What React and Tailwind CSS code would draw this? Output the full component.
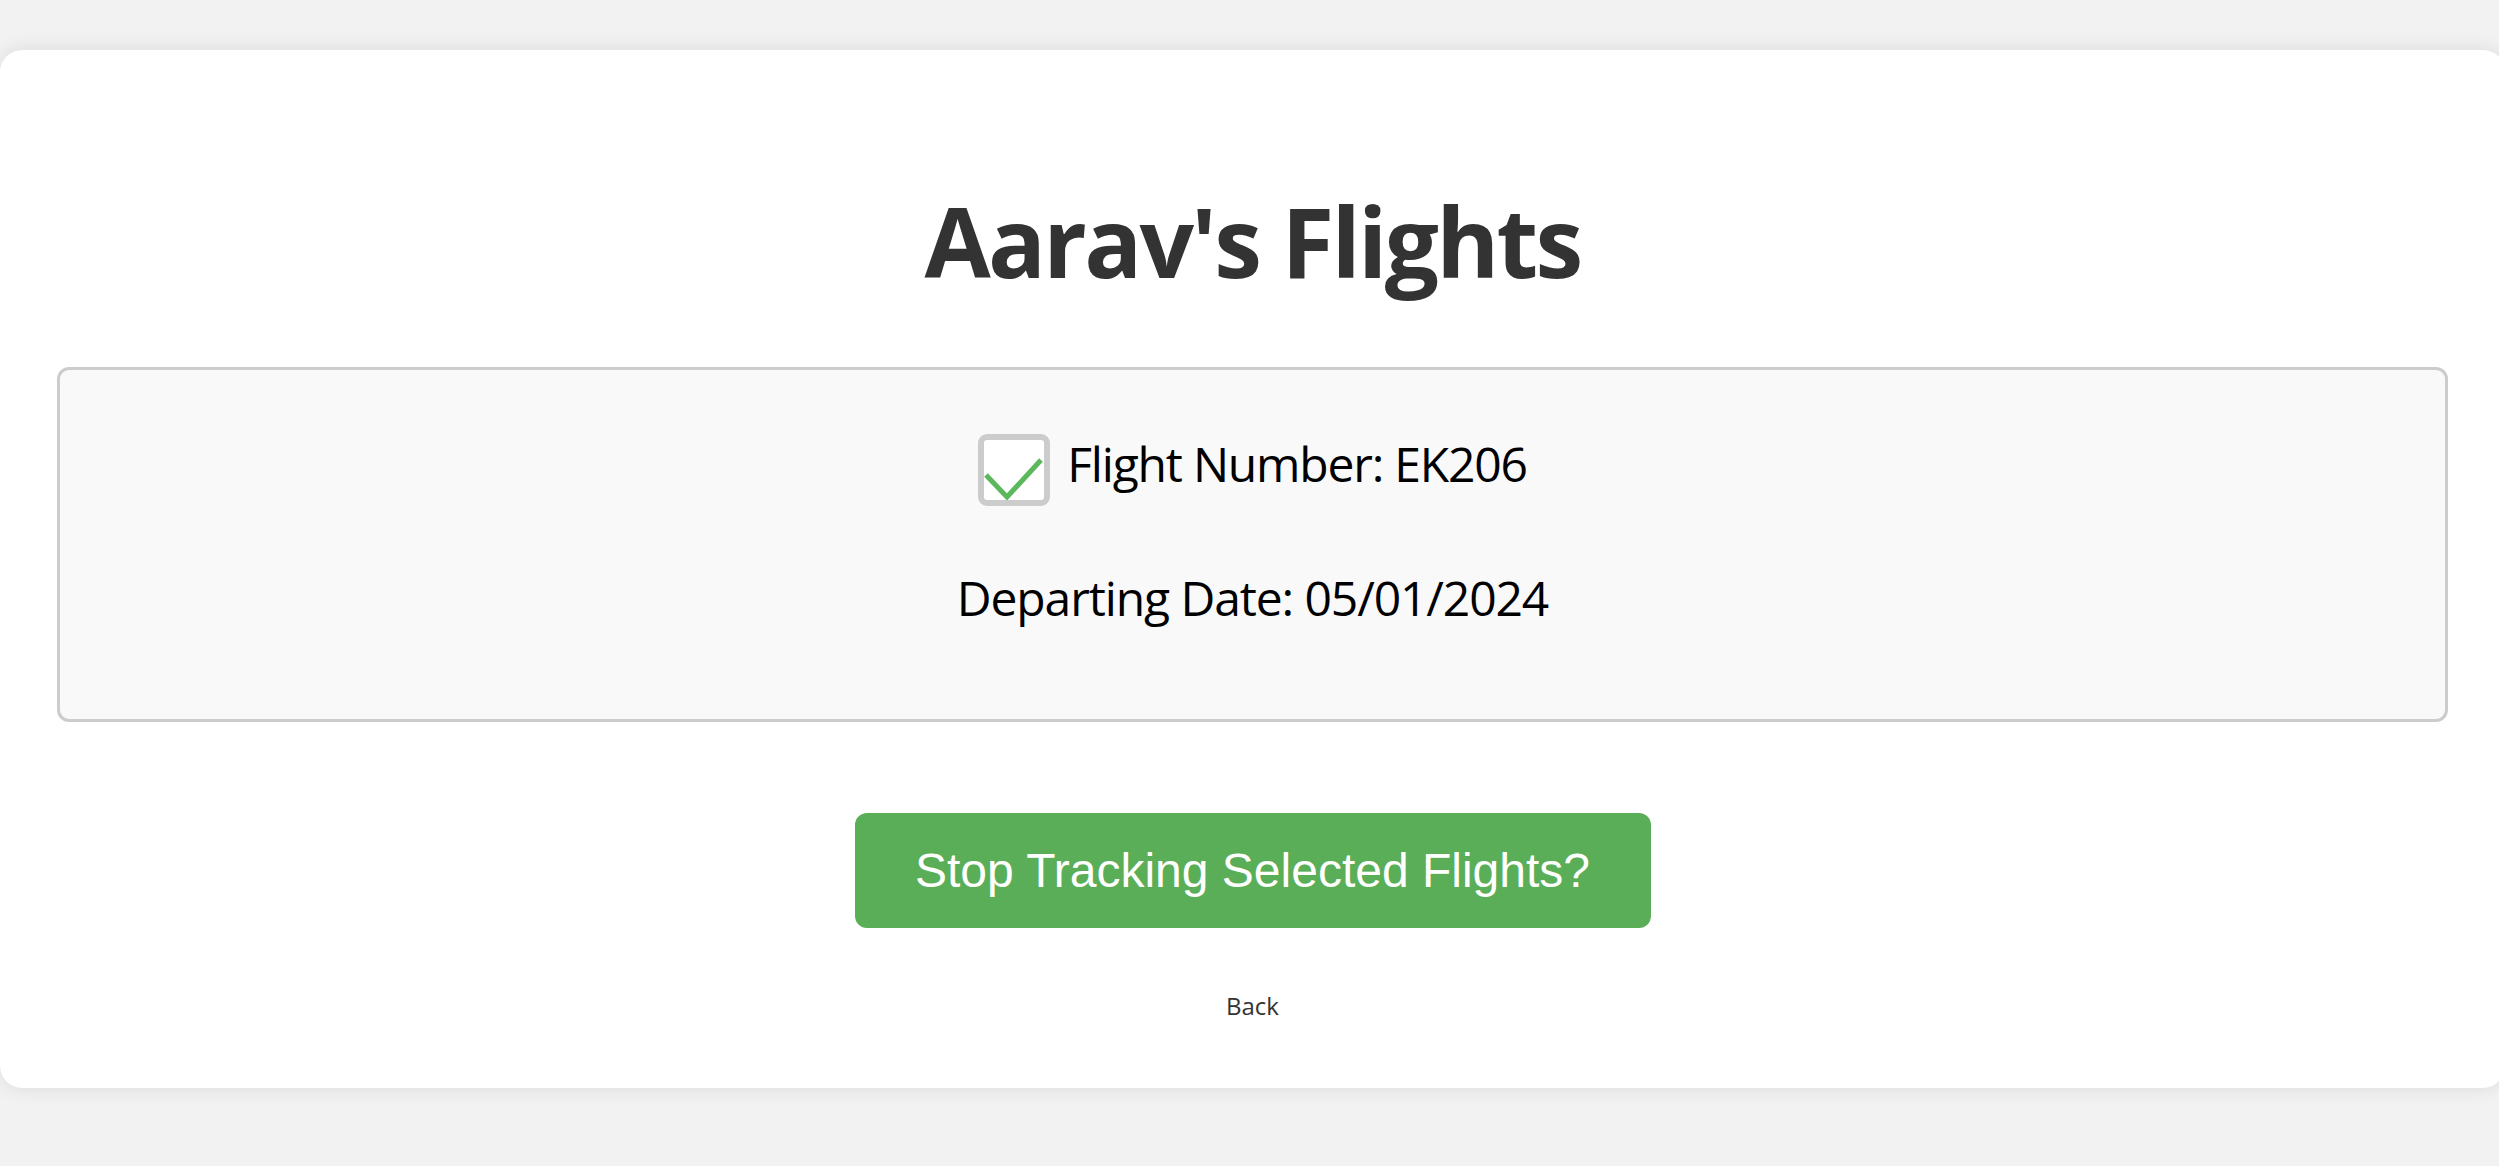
import React, { useState } from 'react';

const vuelo = {
  numero: 'EK206',
  fecha: '05/01/2024',
};

const App = () => {
  const [seleccionado, setSeleccionado] = useState(true);

  return (
    <div className="min-h-screen bg-[#f2f2f2] overflow-hidden pt-[50px] font-['Open_Sans',sans-serif]">
      {/* Card */}
      <div className="w-[2505px] bg-white rounded-[22px] shadow-[0_0_20px_rgba(0,0,0,0.1)] px-[57px] pt-[143px] pb-[70px]">
        <h1 className="text-center text-[96px] font-bold leading-none tracking-[-2.7px] text-[#333]">Aarav's Flights</h1>

        {/* Flight box */}
        <div className="mt-[78px] h-[355px] border-[3px] border-[#ccc] rounded-[12px] bg-[#f9f9f9] pt-[64px] flex flex-col items-center">
          <div className="flex items-start gap-[17px]">
            <button
              onClick={() => setSeleccionado(!seleccionado)}
              className="w-[72px] h-[72px] border-[6px] border-[#ccc] rounded-[9px] bg-white flex items-center justify-center"
            >
              {seleccionado && (
                <svg width="60" height="60" viewBox="0 0 60 60" fill="none">
                  <polyline points="2,35 23,57 57,20" stroke="#5cb85c" strokeWidth="5" />
                </svg>
              )}
            </button>
            <span className="mt-[6px] text-[48px] leading-none tracking-[-1.2px] text-black">Flight Number: {vuelo.numero}</span>
          </div>
          <p className="mt-[68px] text-[48px] leading-none tracking-[-1.1px] text-black">Departing Date: {vuelo.fecha}</p>
        </div>

        <div className="flex justify-center mt-[91px]">
          <button className="w-[796px] h-[115px] rounded-[12px] bg-[#5aae58] text-white text-[48px] font-['Liberation_Sans',Arial,sans-serif] flex items-center justify-center">
            Stop Tracking Selected Flights?
          </button>
        </div>

        <div className="flex justify-center mt-[66px]">
          <a href="#" className="text-[24px] leading-none text-[#333]">Back</a>
        </div>
      </div>
    </div>
  );
};

export default App;
